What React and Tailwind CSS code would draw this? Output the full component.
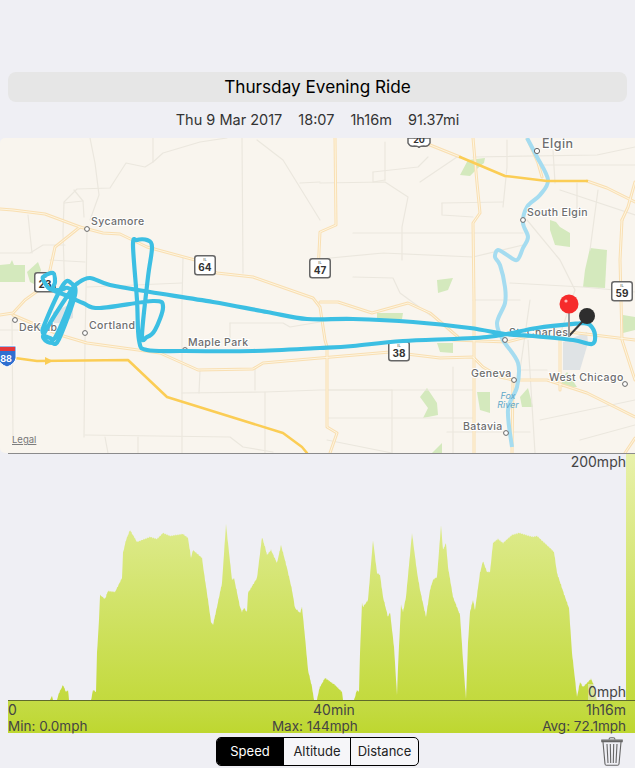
import React from 'react';

const minorRoads = [
  '90,138 95,163 99,195 90,220', '153,138 153,162 145,167 126,163 110,188 77,189 64,202 63,233 65,300',
  '74,190 83,201 64,203', '83,201 84,217', '227,138 200,142 163,153 153,162', '242,138 243,273',
  '257,140 283,160 320,220', '300,183 320,182', '87,230 86,293 85,343 84,437', '28,215 32,253',
  '0,253 30,253 43,245 65,245', '50,260 85,262', '87,287 182,283', '183,257 182,303 182,393 182,453',
  '385,142 385,180', '373,172 373,182 385,180', '373,172 418,167 428,157', '320,183 385,182 408,197 402,227 402,260',
  '442,203 503,202', '442,203 442,215 473,217', '420,182 457,157', '353,233 453,233 523,233', '320,259 383,253 473,257 523,245',
  '507,140 507,167 503,207', '473,157 597,155 635,147', '553,150 555,183', '577,183 577,210', '527,220 560,260 575,290 560,335',
  '510,283 583,287 635,292', '353,277 393,278 400,293 430,315', '392,390 392,453', '327,390 473,390',
  '453,367 453,453', '520,370 547,370', '327,418 473,418', '447,432 530,432', '182,393 265,392 320,390 392,390',
  '200,370 199,393', '265,392 265,453', '255,367 255,390', '85,435 230,437 243,447 273,452', '12,320 13,437',
  '138,437 138,453', '105,437 108,453', '0,330 43,330', '230,323 230,340', '230,323 283,323 290,327 320,322',
  '528,340 535,453', '540,165 635,165', '560,190 635,215', '598,190 590,250', '530,300 520,370', '473,300 520,300',
  '540,420 635,400', '580,440 635,425', '327,440 392,453',
];

const mainRoads = [
  '0,209 13,210 45,214 80,227 103,233 120,234 147,247 195,260 217,273 253,277 313,298 320,307 325,340 327,347 327,427 337,433 330,453',
  '80,227 55,247 50,270 43,287 25,300 13,313 0,315', '13,315 60,335 87,343 160,353 198,370 253,369 263,363 320,358 390,352 440,358 473,357 483,367 500,377 513,380 547,380 587,393 635,417',
  '320,302 338,302 372,313 408,303 430,313 458,337', '335,138 336,225 320,232 318,273',
  '473,138 477,183 480,213 473,223 474,300 474,453', '430,145 460,157', '587,181 607,188 635,202',
  '527,138 538,163 542,177', '560,337 560,390', '622,220 628,207 635,182', '622,220 620,260 622,340 635,380',
  '453,340 507,342 553,330 635,340', '513,380 512,453', '635,438 625,453',
];

const parks = [
  '0,265 10,264 12,260 14,265 25,265 25,282 0,282', '27,272 38,262 41,270 36,285 30,282',
  '460,175 468,160 485,158 484,163 478,168 470,176', '550,220 556,222 560,227 570,233 570,247 555,245 550,230',
  '590,248 607,250 605,288 583,287 585,270', '437,280 453,278 448,290 438,293', '377,313 403,313 402,319 385,320 377,319',
  '437,343 453,343 453,353 440,352', '420,397 427,388 437,403 438,415 423,418 428,408',
  '477,392 490,392 490,413 480,410', '520,397 528,388 533,407 522,407', '623,315 635,317 635,330 623,333',
  '562,378 567,372 577,387 562,387', '432,453 442,443 442,453',
];

const urban = ['563,342 587,332 588,343 580,370 563,370', '53,312 73,303 73,318 60,323 53,323'];

const river = [[527, 138], [537, 157], [548, 180], [540, 195], [527, 207], [523, 223], [528, 237], [523, 248], [517, 260], [507, 255], [498, 250], [495, 257], [500, 265], [505, 287], [505, 303], [497, 323], [503, 340], [518, 363], [517, 387], [508, 410], [512, 447]];

const track = [
  [583, 323], [590, 325], [595, 335], [592, 344], [573, 340], [533, 336], [505, 334], [470, 328], [413, 322], [353, 319], [307, 319], [267, 312],
  [213, 302], [150, 292], [110, 285], [90, 278], [78, 283], [70, 292], [46, 330], [44, 339], [52, 343], [59, 339], [75, 295], [71, 283], [63, 285],
  [45, 323], [43, 333], [50, 338], [56, 336], [72, 297], [68, 288], [60, 290], [50, 289], [45, 283], [43, 277], [53, 273], [55, 282], [53, 290],
  [65, 295], [83, 303], [100, 308], [153, 301], [163, 307], [155, 330], [147, 337], [142, 335], [148, 277], [152, 247], [147, 240], [137, 240],
  [133, 245], [137, 300], [139, 340], [147, 350], [185, 351], [253, 351], [320, 348], [353, 346], [403, 341], [487, 337], [537, 328], [583, 323],
];

const places = [
  { name: 'Sycamore', x: 91, y: 225, dx: 87, dy: 229 },
  { name: 'Cortland', x: 89, y: 329, dx: 85, dy: 333 },
  { name: 'Maple Park', x: 188, y: 346, dx: 185, dy: 350 },
  { name: 'DeKalb', x: 19, y: 331, dx: 15, dy: 320 },
  { name: 'South Elgin', x: 527, y: 216, dx: 523, dy: 220 },
  { name: 'St. Charles', x: 509, y: 336, dx: 505, dy: 340 },
  { name: 'Geneva', x: 471, y: 377, dx: 514, dy: 380 },
  { name: 'West Chicago', x: 549, y: 381, dx: 625, dy: 384 },
  { name: 'Batavia', x: 463, y: 430, dx: 506, dy: 433 },
];

const shields = [
  { n: '23', x: 34, y: 272 }, { n: '64', x: 194, y: 255 }, { n: '47', x: 309, y: 258 },
  { n: '59', x: 611, y: 281 }, { n: '38', x: 388, y: 341 },
];

const speedOutline = [
  [8, 700], [50, 700], [52, 696], [53, 700], [57, 700], [59, 693], [63, 685], [66, 692], [68, 690], [69, 700], [91, 700], [93, 690], [96, 692],
  [97, 653], [99, 620], [100, 595], [105, 599], [108, 591], [115, 592], [122, 578], [123, 553], [126, 540], [130, 530], [137, 542], [150, 537],
  [157, 539], [163, 533], [170, 536], [183, 534], [188, 538], [191, 558], [193, 550], [202, 558], [204, 573], [208, 600], [211, 622], [213, 625],
  [217, 607], [222, 583], [226, 524], [228, 543], [232, 580], [234, 578], [240, 607], [242, 612], [244, 608], [247, 612], [248, 593], [257, 578],
  [262, 537], [265, 547], [267, 555], [271, 550], [277, 563], [281, 545], [287, 568], [292, 590], [295, 608], [300, 613], [302, 607], [305, 637],
  [308, 670], [312, 687], [314, 700], [317, 700], [319, 690], [320, 687], [325, 678], [335, 685], [342, 692], [343, 700], [354, 700], [357, 690],
  [359, 692], [360, 653], [362, 603], [363, 607], [368, 600], [373, 540], [377, 573], [380, 575], [383, 597], [388, 617], [390, 612], [394, 647],
  [397, 695], [398, 667], [401, 605], [403, 612], [406, 597], [412, 533], [417, 572], [420, 590], [426, 617], [430, 590], [433, 580], [437, 577],
  [441, 525], [443, 550], [446, 543], [448, 567], [453, 597], [460, 615], [463, 660], [466, 699], [468, 643], [470, 612], [473, 600], [475, 610],
  [480, 573], [483, 561], [487, 572], [490, 572], [493, 543], [498, 539], [503, 543], [512, 535], [519, 533], [533, 537], [537, 536], [550, 548],
  [554, 552], [557, 573], [565, 597], [569, 608], [572, 653], [577, 697], [580, 682], [583, 687], [588, 682], [591, 679], [593, 683], [597, 700], [626, 700],
];

// sample the outline every half pixel and rough it up a little, the real trace is noisy
function speedPath() {
  const pts = [];
  for (let i = 0; i < speedOutline.length - 1; i++) {
    const [x1, y1] = speedOutline[i];
    const [x2, y2] = speedOutline[i + 1];
    const steps = Math.max(1, Math.round((x2 - x1) * 2));
    for (let s = 0; s < steps; s++) {
      const x = x1 + ((x2 - x1) * s) / steps;
      const y = y1 + ((y2 - y1) * s) / steps;
      const noise = y < 698 ? Math.sin(x * 7.3) * 0.6 + Math.sin(x * 3.1) * 0.4 : 0;
      pts.push(`${x.toFixed(1)},${(y + noise).toFixed(1)}`);
    }
  }
  return `M${pts.join(' L')} L626,700 Z`;
}

// catmull-rom through the points, gives the rounded look of the recorded route
function smoothPath(pts) {
  let d = `M${pts[0][0]},${pts[0][1]}`;
  for (let i = 0; i < pts.length - 1; i++) {
    const p0 = pts[Math.max(0, i - 1)];
    const p1 = pts[i];
    const p2 = pts[i + 1];
    const p3 = pts[Math.min(pts.length - 1, i + 2)];
    const c1x = p1[0] + (p2[0] - p0[0]) / 6;
    const c1y = p1[1] + (p2[1] - p0[1]) / 6;
    const c2x = p2[0] - (p3[0] - p1[0]) / 6;
    const c2y = p2[1] - (p3[1] - p1[1]) / 6;
    d += ` C${c1x.toFixed(1)},${c1y.toFixed(1)} ${c2x.toFixed(1)},${c2y.toFixed(1)} ${p2[0]},${p2[1]}`;
  }
  return d;
}

function Line({ points, className }) {
  return <polyline points={points} fill="none" strokeLinejoin="round" strokeLinecap="round" className={className} />;
}

function Shield({ n, x, y }) {
  return (
    <g transform={`translate(${x} ${y})`}>
      <rect x="0.75" y="0.75" width="20.5" height="19" rx="2.5" fill="#fff" stroke="#666" strokeWidth="1.5" />
      <text x="11" y="6" textAnchor="middle" className="fill-[#888] text-[4px] font-bold">IL</text>
      <text x="11" y="15.5" textAnchor="middle" className="fill-[#333] text-[10px] font-bold">{n}</text>
    </g>
  );
}

function RideMap() {
  return (
    <svg viewBox="0 138 635 315" className="block h-[315px] w-[635px] rounded-l-[5px] font-['Inter',sans-serif]">
      <rect x="0" y="138" width="635" height="315" fill="#f9f5ee" />
      {urban.map((p) => <polygon key={p} points={p} fill="#dfe3e5" />)}
      {parks.map((p) => <polygon key={p} points={p} fill="#d4e9bd" />)}
      {minorRoads.map((p) => <Line key={p} points={p} className="stroke-[#ebe7de] stroke-[1.2]" />)}
      {mainRoads.map((p) => <Line key={p} points={p} className="stroke-[#f9dfb2] stroke-[3]" />)}
      {mainRoads.map((p) => <Line key={p} points={p} className="stroke-[#fdf5e2] stroke-[1]" />)}
      <path d={smoothPath(river)} fill="none" className="stroke-[#a5dcf0] stroke-[4]" />
      <Line points="460,157 505,176 547,181 587,181" className="stroke-[#fbcd55] stroke-[2.5]" />
      <Line points="15,358 37,361 128,360 167,397 283,433 302,447 307,453" className="stroke-[#fbcd55] stroke-[2.5]" />
      <polygon points="45,357 53,361 45,365" fill="#fbcd55" />
      {places.map((p) => (
        <g key={p.name}>
          <text x={p.x} y={p.y} className="fill-[#6e6e6e] stroke-white stroke-[2] text-[10.5px] font-medium tracking-[0.4px] [paint-order:stroke]">{p.name}</text>
          <circle cx={p.dx} cy={p.dy} r="2.4" fill="#fff" stroke="#666" strokeWidth="1" />
        </g>
      ))}
      <text x="542" y="148" className="fill-[#6e6e6e] stroke-white stroke-[2] text-[12.5px] font-medium tracking-[0.5px] [paint-order:stroke]">Elgin</text>
      <circle cx="537" cy="151" r="2.6" fill="#fff" stroke="#666" strokeWidth="1" />
      <text x="508" y="399" textAnchor="middle" className="fill-[#5fa8c9] text-[9px] italic">Fox</text>
      <text x="508" y="408" textAnchor="middle" className="fill-[#5fa8c9] text-[9px] italic">River</text>
      <text x="12" y="443" className="fill-[#777] text-[9.5px] underline">Legal</text>
      {shields.map((s) => <Shield key={s.n} {...s} />)}
      <path d="M408 138 H430 V143 Q428 147 424 146 Q419 146 419 148 Q419 146 414 146 Q410 147 408 143 Z" fill="#fff" stroke="#666" strokeWidth="1.5" />
      <text x="419" y="143" textAnchor="middle" className="fill-[#333] text-[9px] font-bold">20</text>
      <path d="M-2 346 H16 V358 Q15 364 7 367 Q-1 364 -2 358 Z" fill="#2f6fd0" stroke="#fff" strokeWidth="1" />
      <rect x="-1" y="347" width="16" height="4" fill="#e5383b" />
      <text x="6" y="362" textAnchor="middle" className="fill-white text-[9px] font-bold">88</text>
      <path d={smoothPath(track)} fill="none" strokeLinejoin="round" className="stroke-[#3cbfe3] stroke-[4.2]" />
      <line x1="569" y1="336" x2="584" y2="320" stroke="#3a3a3a" strokeWidth="2" />
      <circle cx="587" cy="316" r="8" fill="#2e2e2e" />
      <line x1="569" y1="310" x2="569" y2="337" stroke="#999" strokeWidth="2" />
      <circle cx="569" cy="304" r="9.5" fill="#f62b2b" />
      <circle cx="566" cy="301" r="1.6" fill="#ffb3b3" />
    </svg>
  );
}

function SpeedChart() {
  return (
    <div className="relative ml-2 h-[247px] border-t border-[#8b8b8b]">
      <svg viewBox="8 454 627 246" className="block h-[246px] w-[627px]">
        <defs>
          <linearGradient id="speedFill" gradientUnits="userSpaceOnUse" x1="0" y1="454" x2="0" y2="733">
            <stop offset="0" stopColor="#e8f1ab" />
            <stop offset="1" stopColor="#bed72f" />
          </linearGradient>
        </defs>
        <path d={speedPath()} fill="url(#speedFill)" />
        <rect x="626" y="454" width="9" height="246" fill="url(#speedFill)" />
      </svg>
      <span className="absolute right-[9px] top-0 text-[14px] leading-[16px] text-[#444]">200mph</span>
      <span className="absolute bottom-0 right-[9px] bg-[#efeff4]/50 text-[14px] leading-[16px] text-[#444]">0mph</span>
    </div>
  );
}

function Segment({ label, active, last }) {
  return (
    <div className={`flex h-full w-[68px] items-center justify-center text-[13px] ${active ? 'bg-black text-white' : 'text-[#222]'} ${last ? '' : 'border-r border-black'}`}>
      {label}
    </div>
  );
}

function TrashIcon() {
  return (
    <svg width="22" height="29" viewBox="0 0 22 29" fill="none" stroke="#666" strokeWidth="1.1">
      <path d="M8 2.5 Q8 .7 9.8 .7 H12.2 Q14 .7 14 2.5" />
      <path d="M.8 3 H21.2 V4.6 H.8 Z" fill="#8a8a8a" />
      <path d="M2 5 L4 27 Q4.2 28.3 5.5 28.3 H16.5 Q17.8 28.3 18 27 L20 5" />
      <path d="M6 7 L7 26 M9.3 7 L9.7 26 M12.7 7 L12.3 26 M16 7 L15 26" />
    </svg>
  );
}

export default function App() {
  return (
    <div className="flex h-[768px] w-[635px] flex-col overflow-hidden bg-[#efeff4] pt-[72px] font-['Inter',sans-serif] text-[#222]">
      <div className="mx-2 flex h-[30px] w-[619px] items-center justify-center rounded-lg bg-[#e6e6e6] text-[17.2px] text-black">
        Thursday Evening Ride
      </div>
      <div className="flex h-[36px] items-center justify-center gap-4 text-[14.5px] text-[#333]">
        <span>Thu 9 Mar 2017</span>
        <span>18:07</span>
        <span>1h16m</span>
        <span>91.37mi</span>
      </div>
      <RideMap />
      <SpeedChart />
      <div className="ml-2 h-[33px] border-t border-[#5f6a2c] bg-gradient-to-b from-[#c4db45] to-[#bed72f] leading-[16px] text-[#444]">
        <div className="flex pr-[9px] pt-px text-[14px]">
          <span className="w-[305px]">0</span>
          <span>40min</span>
          <span className="ml-auto">1h16m</span>
        </div>
        <div className="flex justify-between pr-[9px] text-[13.5px]">
          <span>Min: 0.0mph</span>
          <span>Max: 144mph</span>
          <span>Avg: 72.1mph</span>
        </div>
      </div>
      <div className="relative mt-1 flex h-[29px] justify-center">
        <div className="flex h-full w-[203px] overflow-hidden rounded-[5px] border border-black bg-[#f6f6f9]">
          <Segment label="Speed" active />
          <Segment label="Altitude" />
          <Segment label="Distance" last />
        </div>
        <div className="absolute right-[12px] top-0">
          <TrashIcon />
        </div>
      </div>
    </div>
  );
}
